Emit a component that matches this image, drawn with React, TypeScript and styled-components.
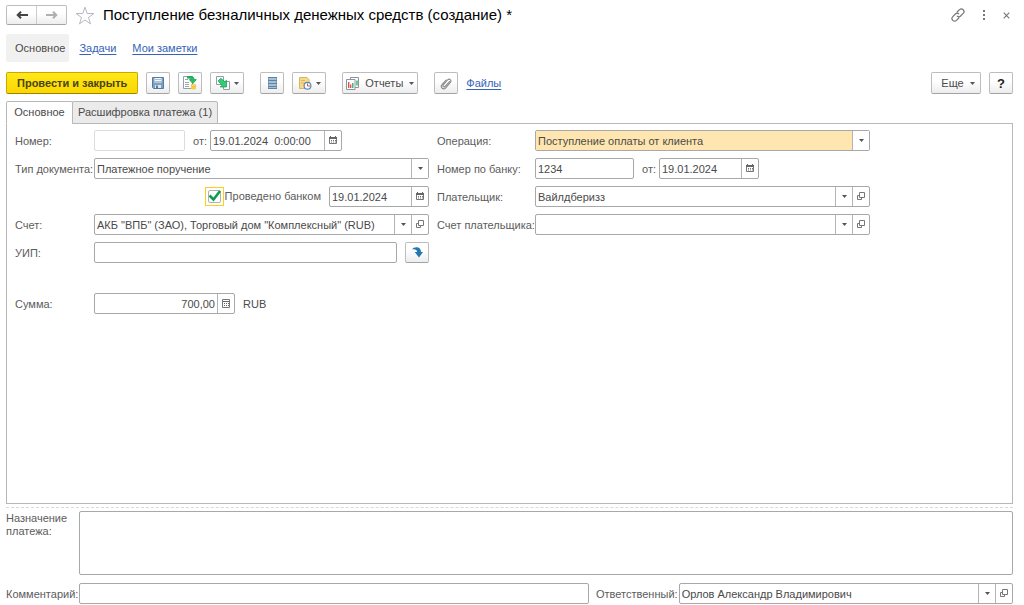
import React from 'react';
import styled, { createGlobalStyle, css } from 'styled-components';

const GlobalStyle = createGlobalStyle`
  *, *::before, *::after { box-sizing: border-box; }
  body {
    margin: 0;
    background: #fff;
    color: #4a4a4a;
    font: 11px/13px "Liberation Sans", Arial, sans-serif;
  }
  button, input, select, textarea { font: inherit; color: inherit; }
  svg { display: block; flex: none; }
`;

const Page = styled.main`
  display: flex;
  flex-direction: column;
  min-height: 100vh;
  padding: 5px 11px 1px 6px;
`;

const Header = styled.header`
  display: flex;
  align-items: center;
  height: 20px;
`;

const raised = css`
  border: 1px solid #bdbdbd;
  border-bottom-color: #a3a3a3;
  border-radius: 2px;
  background: linear-gradient(#fff 40%, #ededed);
`;

const History = styled.div`
  ${raised}
  display: flex;
  width: 61px;
  height: 20px;
`;

const HistoryButton = styled.button`
  display: flex;
  flex: 1;
  align-items: center;
  justify-content: center;
  padding: 0;
  border: 0;
  background: none;
  color: #444;

  &:disabled { color: #b0b0b0; }
  & + & { border-left: 1px solid #ccc; }
`;

const PlainButton = styled.button`
  display: flex;
  align-items: center;
  justify-content: center;
  padding: 0;
  border: 0;
  background: none;
  color: #777;
`;

const StarButton = styled(PlainButton)`
  margin: 0 8px 0 8px;
`;

const Title = styled.h1`
  flex: 1;
  margin: 0;
  color: #000;
  font-size: 15px;
  line-height: 20px;
  font-weight: 400;
`;

const WindowTools = styled.div`
  display: flex;
  align-items: center;
  gap: 17px;
  padding-right: 3px;
`;

const Sections = styled.nav`
  display: flex;
  align-items: center;
  gap: 16px;
  margin-top: 9px;
`;

const CurrentSection = styled.span`
  padding: 7px 4px 7px 9px;
  margin-right: -6px;
  border-radius: 2px;
  background: #f1f1f1;
  line-height: 14px;
`;

const Link = styled.a`
  color: #3563b8;
  text-decoration: underline;
  text-underline-offset: 2px;
`;

const Toolbar = styled.div`
  display: flex;
  align-items: center;
  gap: 8px;
  margin-top: 10px;
`;

const ToolButton = styled.button<{ $wide?: boolean }>`
  ${raised}
  display: flex;
  align-items: center;
  justify-content: center;
  gap: 4px;
  width: ${p => (p.$wide ? 34 : 24)}px;
  height: 22px;
  padding: 0;
`;

const ReportsButton = styled(ToolButton)`
  gap: 6px;
  width: 76px;
`;

const MoreButton = styled(ToolButton)`
  gap: 6px;
  width: 50px;
  padding-left: 4px;
`;

const HelpButton = styled(ToolButton)`
  color: #222;
  font-weight: 700;
  font-size: 13px;
`;

const FillButton = styled(ToolButton)`
  height: 21px;
`;

const PrimaryButton = styled.button`
  height: 22px;
  padding: 0 10px;
  border: 1px solid #c9a800;
  border-bottom-color: #9c8300;
  border-radius: 2px;
  background: linear-gradient(#ffe81a, #fbd700);
  color: #4a4412;
  font-weight: 700;
`;

const ToolGroup = styled.div<{ $push?: boolean }>`
  display: flex;
  align-items: center;
  gap: 8px;
  margin-left: ${p => (p.$push ? 'auto' : '8px')};
`;

const Tabs = styled.div`
  display: flex;
  position: relative;
  margin: 7px 0 -1px;
`;

const Tab = styled.button<{ $active?: boolean }>`
  min-width: 67px;
  height: 23px;
  padding: 0 5px;
  border: 1px solid #b8b8b8;
  border-bottom-color: ${p => (p.$active ? '#fff' : '#b8b8b8')};
  border-radius: 2px 2px 0 0;
  background: ${p => (p.$active ? '#fff' : '#ebebeb')};

  & + & { margin-left: -1px; }
`;

const Panel = styled.section`
  flex: 1;
  padding: 6px 8px;
  border: 1px solid #b8b8b8;
`;

const FormGrid = styled.div`
  display: grid;
  grid-template-columns: minmax(0, 414fr) minmax(0, 433fr);
  gap: 7px 8px;
  max-width: 855px;
`;

const Row = styled.div<{ $label: number }>`
  display: grid;
  grid-template-columns: ${p => p.$label}px minmax(0, 1fr);
  align-items: center;
  min-height: 21px;
`;

const SumRow = styled(Row)`
  margin-top: 23px;
`;

const Label = styled.label`
  padding-top: 1px;
  color: #5c5c5c;
  white-space: nowrap;
`;

const Controls = styled.div<{ $end?: boolean }>`
  display: flex;
  align-items: center;
  justify-content: ${p => (p.$end ? 'flex-end' : 'flex-start')};
  gap: 8px;
`;

const LabeledField = styled.div`
  display: flex;
  align-items: center;
  gap: 3px;
`;

const Currency = styled.span`
  padding-top: 1px;
`;

const frame = css`
  height: 21px;
  border: 1px solid #a8a8a8;
  border-radius: 2px;
  background: #fff;
`;

const Input = styled.input<{ $width?: number }>`
  ${frame}
  ${p => (p.$width ? `width: ${p.$width}px;` : 'flex: 1; min-width: 0;')}
  padding: 0 2px;

  &:disabled { border-color: #dcdcdc; }
`;

const Frame = styled.div<{ $width?: number }>`
  ${frame}
  display: flex;
  width: ${p => (p.$width ? `${p.$width}px` : '100%')};
`;

const FrameInput = styled.input<{ $right?: boolean }>`
  flex: 1;
  min-width: 0;
  padding: 1px 2px 0;
  border: 0;
  background: none;
  text-align: ${p => (p.$right ? 'right' : 'left')};
`;

const FrameButton = styled.button`
  display: flex;
  flex: none;
  align-items: center;
  justify-content: center;
  width: 17px;
  padding: 0 0 1px;
  border: 0;
  border-left: 1px solid #b4b4b4;
  background: none;
  color: #4a4a4a;
`;

const SelectGrid = styled.div`
  display: grid;
  flex: 1;
  grid-template-columns: minmax(0, 1fr) 17px;
`;

const Select = styled.select<{ $filled?: boolean }>`
  grid-area: 1 / 1 / 2 / 3;
  appearance: none;
  padding: 1px 19px 0 2px;
  border: 0;
  background: ${p => (p.$filled ? '#ffe6b0' : 'transparent')};
`;

const SelectArrow = styled.span`
  display: flex;
  grid-area: 1 / 2;
  align-items: center;
  justify-content: center;
  padding-bottom: 1px;
  border-left: 1px solid #b4b4b4;
  background: #fff;
  pointer-events: none;
`;

const CheckLabel = styled.label`
  display: flex;
  align-items: center;
  gap: 1px;
  color: #5c5c5c;
`;

const CheckFrame = styled.span`
  display: grid;
  place-items: center;
  width: 19px;
  height: 19px;
  border: 1px solid #ffcb1f;

  & > * { grid-area: 1 / 1; }
`;

const Checkbox = styled.input`
  appearance: none;
  width: 13px;
  height: 13px;
  margin: 0;
  border: 1px solid #b0b0b0;
  border-radius: 2px;
  background: #fff;

  & + svg { visibility: hidden; pointer-events: none; }
  &:checked + svg { visibility: visible; }
`;

const Footer = styled.footer`
  display: grid;
  grid-template-columns: 73px minmax(0, 1fr);
  gap: 8px 0;
  margin-top: 3px;
  padding-top: 3px;
  border-top: 1px dashed #d8d8d8;
`;

const PurposeLabel = styled(Label)`
  white-space: normal;
`;

const Purpose = styled.textarea`
  ${frame}
  height: 64px;
  padding: 2px;
  resize: none;
`;

const FooterLabel = styled(Label)`
  align-self: center;
`;

const FooterControls = styled.div`
  display: grid;
  grid-template-columns: minmax(0, 511fr) auto minmax(0, 335fr);
  align-items: center;
`;

const OwnerLabel = styled(Label)`
  padding: 1px 1px 0 7px;
`;

const Arrow = ({ back }: { back?: boolean }) => (
  <svg width="12" height="8" viewBox="0 0 12 8" fill="none" stroke="currentColor" strokeWidth="2" aria-hidden="true">
    <path d={back ? 'M12 4H2M5 .7L1.700 4 5 7.300' : 'M0 4h10M7 .7L10.300 4 7 7.300'} />
  </svg>
);

const Star = () => (
  <svg width="20" height="19" viewBox="0 0 20 19" fill="none" stroke="#b4b8bf" aria-hidden="true">
    <path d="M10 1.200l2.200 6.300h6.600l-5.300 4 2 6.400L10 14l-5.500 3.900 2-6.400-5.300-4h6.600z" />
  </svg>
);

const Chain = () => (
  <svg width="14" height="14" viewBox="0 0 14 14" fill="none" stroke="currentColor" strokeWidth="1.200" strokeLinecap="round" aria-hidden="true">
    <path d="M6.200 4L8.500 1.700a2.500 2.500 0 0 1 3.700 3.700L9.600 8a2.500 2.500 0 0 1-3.300.2M7.800 10l-2.300 2.300a2.500 2.500 0 0 1-3.700-3.700L4.400 6a2.500 2.500 0 0 1 3.300-.2" />
  </svg>
);

const Dots = () => (
  <svg width="4" height="10" viewBox="0 0 4 10" fill="currentColor" aria-hidden="true">
    <path d="M1 0h2v2H1zM1 4h2v2H1zM1 8h2v2H1z" />
  </svg>
);

const Cross = () => (
  <svg width="7" height="7" viewBox="0 0 7 7" fill="none" stroke="currentColor" strokeWidth="1.100" aria-hidden="true">
    <path d="M.7.7l5.600 5.600M6.300.7L.7 6.300" />
  </svg>
);

const Caret = () => (
  <svg width="5" height="3" viewBox="0 0 5 3" fill="#555" aria-hidden="true">
    <path d="M0 0h5L2.500 3z" />
  </svg>
);

const Floppy = () => (
  <svg width="12" height="12" viewBox="0 0 12 12" aria-hidden="true">
    <path d="M.5.5h11v11h-10l-1-1z" fill="#7ba0c0" stroke="#557c9f" />
    <path d="M2.500 1h7v4.500h-7z" fill="#f2f7fb" />
    <path d="M3 2.500h6M3 4.500h6" stroke="#a9c0d3" />
    <path d="M3 8h6v3H3z" fill="#dde8f1" />
    <path d="M4 8.500h2V11H4z" fill="#557c9f" />
  </svg>
);

const PostDocument = () => (
  <svg width="16" height="14" viewBox="0 0 16 14" aria-hidden="true">
    <path d="M1.500.5h9v12h-9z" fill="#fff" stroke="#8fa0ac" />
    <path d="M3 3.500h3M3 6.500h4M3 8.500h4M3 10.500h4" stroke="#9aa6ae" />
    <path d="M5.500.6h3.300c2.500 0 3.300 1.200 3.300 3h2.200l-3.500 4-3.500-4h2c0-1.300-1-1.600-3.800-1.400z" fill="#22c063" stroke="#149a4a" strokeWidth=".7" />
    <path d="M9 9v3.500c0 1.300 5 1.300 5 0V9z" fill="#f3cd4f" />
    <ellipse cx="11.500" cy="9.200" rx="2.500" ry="1.100" fill="#ffe58a" stroke="#d8aa28" strokeWidth=".5" />
  </svg>
);

const CreateFrom = () => (
  <svg width="14" height="14" viewBox="0 0 14 14" aria-hidden="true">
    <path d="M.5.5h7v8h-7z" fill="#fff" stroke="#8fa0ac" />
    <path d="M7.500 5.500h6v8h-6z" fill="#fff" stroke="#8fa0ac" />
    <path d="M2 5l2.800-2.700 4 3.500 1.700-1.600V11H4.200L6 9.200z" fill="#2fcf72" stroke="#17964b" strokeWidth=".7" />
  </svg>
);

const Register = () => (
  <svg width="9" height="12" viewBox="0 0 9 12" aria-hidden="true">
    <path d="M.5.5h8v11h-8z" fill="#a5c1d8" stroke="#7f9eb8" />
    <path d="M0 .5h9M0 3.500h9M0 6.500h9M0 9.500h9M0 11.500h9" stroke="#5f83a2" />
  </svg>
);

const NoteClock = () => (
  <svg width="14" height="13" viewBox="0 0 14 13" aria-hidden="true">
    <path d="M1.500.5h7.500l2 2V11.500h-9.500z" fill="#f5d98d" stroke="#d9b45a" />
    <path d="M3 3.500h4M3 6h3" stroke="#dbb65c" />
    <circle cx="9.500" cy="8.800" r="3.400" fill="#fff" stroke="#5f88b5" strokeWidth="1.200" />
    <path d="M9.500 6.500v2.500H12" fill="none" stroke="#cf5444" />
  </svg>
);

const Charts = () => (
  <svg width="13" height="13" viewBox="0 0 13 13" aria-hidden="true">
    <path d="M4.500.5h8v10h-8z" fill="#fff" stroke="#8795a0" />
    <path d="M11 3.500v5" stroke="#29a860" strokeWidth="1.300" />
    <path d="M.5 2.500h8.500v10H.5z" fill="#fff" stroke="#8795a0" />
    <path d="M2.700 5v6" stroke="#db4a40" strokeWidth="1.300" />
    <path d="M4.700 7.500V11" stroke="#db4a40" strokeWidth="1.300" />
    <path d="M6.800 6v5" stroke="#29a860" strokeWidth="1.300" />
  </svg>
);

const Clip = () => (
  <svg width="12" height="13" viewBox="0 0 12 13" fill="none" stroke="#888" strokeWidth="1.100" strokeLinecap="round" aria-hidden="true">
    <path d="M9.500 4.500L5 9.500c-1.200 1.200-2.700-.2-1.700-1.500l4.200-5c1.800-2 4.500.2 2.900 2.300l-4.700 5.500c-2.400 2.500-5.800-.3-3.800-3L6 3" />
  </svg>
);

const Calendar = () => (
  <svg width="8" height="8" viewBox="0 0 8 8" aria-hidden="true">
    <path d="M.5 1.500h7v6h-7z" fill="#fff" stroke="#777" />
    <path d="M0 1h8v2H0zM1 0h1v1H1zM6 0h1v1H6z" fill="#666" />
    <path d="M2 4.500h5M2 6h5" stroke="#777" strokeDasharray="1 1" />
  </svg>
);

const Calculator = () => (
  <svg width="8" height="9" viewBox="0 0 8 9" aria-hidden="true">
    <path d="M.5.5h7v8h-7z" fill="#fff" stroke="#777" />
    <path d="M1 2.500h6" stroke="#666" />
    <path d="M2 4.500h5M2 6.500h5" stroke="#666" strokeDasharray="1 1" />
  </svg>
);

const OpenIcon = () => (
  <svg width="8" height="8" viewBox="0 0 8 8" fill="none" stroke="#777" aria-hidden="true">
    <path d="M2.500.5h5v5h-5zM2.500 3.500h-2v4h4v-2" />
  </svg>
);

const CurvedArrow = () => (
  <svg width="11" height="11" viewBox="0 0 11 11" fill="#2478b0" aria-hidden="true">
    <path d="M0 2.500C2-.5 8.700-1 9 5h2L7 10.500 2.700 5h2.400C5.300 3 3 1.800 0 2.500z" />
  </svg>
);

const Tick = () => (
  <svg width="15" height="15" viewBox="0 0 15 15" fill="none" stroke="#0c9c50" strokeWidth="2.500" aria-hidden="true">
    <path d="M2.500 6.500l4 4L13 2" />
  </svg>
);

type DateFieldProps = { id: string; value: string; width: number; label?: string };

const DateField = ({ id, value, width, label }: DateFieldProps) => (
  <Frame $width={width}>
    <FrameInput id={id} defaultValue={value} aria-label={label} />
    <FrameButton type="button" aria-label="Выбрать дату"><Calendar /></FrameButton>
  </Frame>
);

type SelectFieldProps = { id: string; value: string; filled?: boolean; openable?: boolean };

const SelectField = ({ id, value, filled, openable }: SelectFieldProps) => (
  <Frame>
    <SelectGrid>
      <Select id={id} $filled={filled} defaultValue={value}>
        <option value={value}>{value}</option>
      </Select>
      <SelectArrow><Caret /></SelectArrow>
    </SelectGrid>
    {openable && <FrameButton type="button" aria-label="Открыть"><OpenIcon /></FrameButton>}
  </Frame>
);

const LEFT = 79;
const RIGHT = 98;

export default function App() {
  return (
    <>
      <GlobalStyle />
      <Page>
        <Header>
          <History>
            <HistoryButton type="button" aria-label="Назад"><Arrow back /></HistoryButton>
            <HistoryButton type="button" aria-label="Вперед" disabled><Arrow /></HistoryButton>
          </History>
          <StarButton type="button" aria-label="В избранное"><Star /></StarButton>
          <Title>Поступление безналичных денежных средств (создание) *</Title>
          <WindowTools>
            <PlainButton type="button" aria-label="Ссылка"><Chain /></PlainButton>
            <PlainButton type="button" aria-label="Меню"><Dots /></PlainButton>
            <PlainButton type="button" aria-label="Закрыть"><Cross /></PlainButton>
          </WindowTools>
        </Header>

        <Sections>
          <CurrentSection>Основное</CurrentSection>
          <Link href="#tasks">Задачи</Link>
          <Link href="#notes">Мои заметки</Link>
        </Sections>

        <Toolbar>
          <PrimaryButton type="button">Провести и закрыть</PrimaryButton>
          <ToolButton type="button" aria-label="Записать"><Floppy /></ToolButton>
          <ToolButton type="button" aria-label="Провести"><PostDocument /></ToolButton>
          <ToolButton type="button" $wide aria-label="Создать на основании"><CreateFrom /><Caret /></ToolButton>
          <ToolGroup>
            <ToolButton type="button" aria-label="Движения документа"><Register /></ToolButton>
            <ToolButton type="button" $wide aria-label="Напоминание"><NoteClock /><Caret /></ToolButton>
          </ToolGroup>
          <ToolGroup>
            <ReportsButton type="button"><Charts />Отчеты<Caret /></ReportsButton>
          </ToolGroup>
          <ToolGroup>
            <ToolButton type="button" aria-label="Прикрепить файл"><Clip /></ToolButton>
            <Link href="#files">Файлы</Link>
          </ToolGroup>
          <ToolGroup $push>
            <MoreButton type="button">Еще<Caret /></MoreButton>
            <HelpButton type="button" aria-label="Справка">?</HelpButton>
          </ToolGroup>
        </Toolbar>

        <Tabs role="tablist">
          <Tab type="button" role="tab" aria-selected="true" $active>Основное</Tab>
          <Tab type="button" role="tab" aria-selected="false">Расшифровка платежа (1)</Tab>
        </Tabs>

        <Panel role="tabpanel">
          <FormGrid>
            <Row $label={LEFT}>
              <Label htmlFor="number">Номер:</Label>
              <Controls>
                <Input id="number" $width={91} disabled />
                <LabeledField>
                  <Label htmlFor="date">от:</Label>
                  <DateField id="date" value="19.01.2024  0:00:00" width={132} />
                </LabeledField>
              </Controls>
            </Row>
            <Row $label={RIGHT}>
              <Label htmlFor="operation">Операция:</Label>
              <SelectField id="operation" value="Поступление оплаты от клиента" filled />
            </Row>

            <Row $label={LEFT}>
              <Label htmlFor="doctype">Тип документа:</Label>
              <SelectField id="doctype" value="Платежное поручение" />
            </Row>
            <Row $label={RIGHT}>
              <Label htmlFor="banknumber">Номер по банку:</Label>
              <Controls>
                <Input id="banknumber" $width={99} defaultValue="1234" />
                <LabeledField>
                  <Label htmlFor="bankdate">от:</Label>
                  <DateField id="bankdate" value="19.01.2024" width={100} />
                </LabeledField>
              </Controls>
            </Row>

            <Row $label={LEFT}>
              <span />
              <Controls $end>
                <CheckLabel>
                  <CheckFrame>
                    <Checkbox type="checkbox" defaultChecked />
                    <Tick />
                  </CheckFrame>
                  Проведено банком
                </CheckLabel>
                <DateField id="posted" value="19.01.2024" width={100} label="Дата проведения банком" />
              </Controls>
            </Row>
            <Row $label={RIGHT}>
              <Label htmlFor="payer">Плательщик:</Label>
              <SelectField id="payer" value="Вайлдберизз" openable />
            </Row>

            <Row $label={LEFT}>
              <Label htmlFor="account">Счет:</Label>
              <SelectField id="account" value={'АКБ "ВПБ" (ЗАО), Торговый дом "Комплексный" (RUB)'} openable />
            </Row>
            <Row $label={RIGHT}>
              <Label htmlFor="payeraccount">Счет плательщика:</Label>
              <SelectField id="payeraccount" value="" openable />
            </Row>

            <Row $label={LEFT}>
              <Label htmlFor="uip">УИП:</Label>
              <Controls>
                <Input id="uip" />
                <FillButton type="button" aria-label="Заполнить УИП"><CurvedArrow /></FillButton>
              </Controls>
            </Row>
            <span />

            <SumRow $label={LEFT}>
              <Label htmlFor="sum">Сумма:</Label>
              <Controls>
                <Frame $width={141}>
                  <FrameInput id="sum" $right defaultValue="700,00" />
                  <FrameButton type="button" aria-label="Калькулятор"><Calculator /></FrameButton>
                </Frame>
                <Currency>RUB</Currency>
              </Controls>
            </SumRow>
          </FormGrid>
        </Panel>

        <Footer>
          <PurposeLabel htmlFor="purpose">Назначение платежа:</PurposeLabel>
          <Purpose id="purpose" />
          <FooterLabel htmlFor="comment">Комментарий:</FooterLabel>
          <FooterControls>
            <Input id="comment" />
            <OwnerLabel htmlFor="owner">Ответственный:</OwnerLabel>
            <SelectField id="owner" value="Орлов Александр Владимирович" openable />
          </FooterControls>
        </Footer>
      </Page>
    </>
  );
}
